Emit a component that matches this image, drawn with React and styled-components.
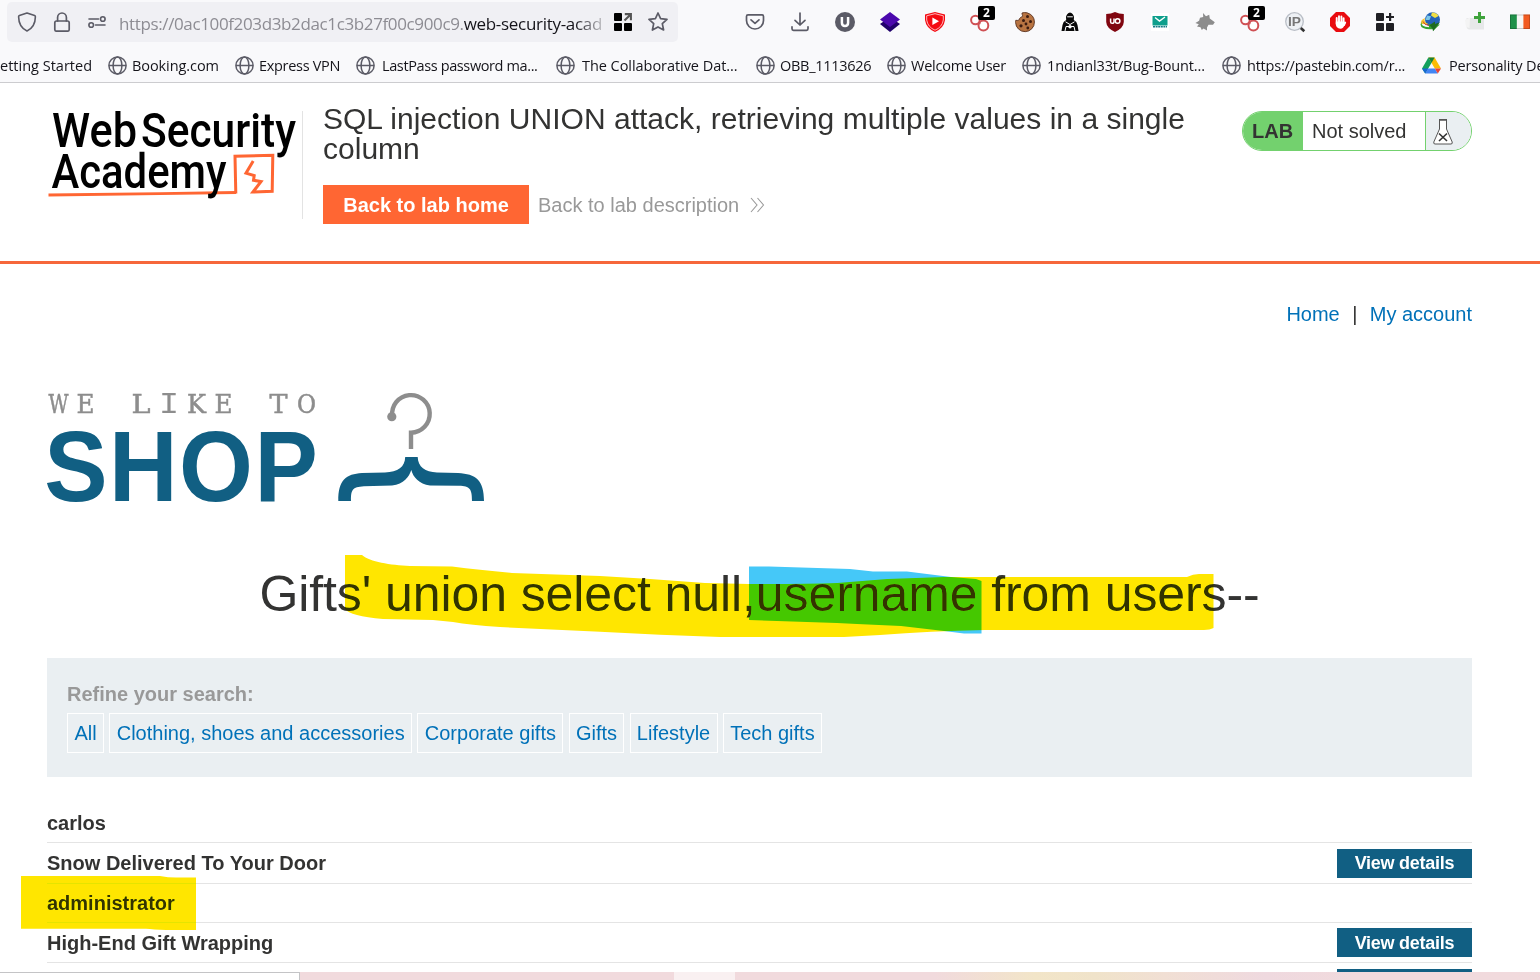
import React from "react";
import styled, { createGlobalStyle } from "styled-components";

const Global = createGlobalStyle`
  * { box-sizing: border-box; }
  body { margin: 0; background: #fff; overflow: hidden; }
`;

const Window = styled.div`
  width: 1540px;
  height: 980px;
  overflow: hidden;
  display: flex;
  flex-direction: column;
  background: #fff;
  color: #333332;
  font: 20px/24px "Liberation Sans", Arial, sans-serif;
`;

/* ---------- browser chrome ---------- */
const Chrome = styled.div`
  flex: none;
  height: 83px;
  background: #f9f9fb;
  border-bottom: 1px solid #cccccf;
  font-family: "Open Sans", "Noto Sans", sans-serif;
  color: #15141a;
`;
const Toolbar = styled.div`
  height: 44px;
  padding: 2px 0 2px 7px;
  display: flex;
`;
const UrlBar = styled.div`
  flex: none;
  width: 671px;
  height: 40px;
  border-radius: 5px;
  background: #f0f0f4;
  display: flex;
  align-items: center;
  padding-left: 10px;
`;
const UrlIcon = styled.span`
  flex: none;
  width: ${(p) => p.$w}px;
  height: 20px;
  svg { display: block; }
`;
const UrlText = styled.div`
  flex: none;
  width: 484px;
  margin-right: 10px;
  font-size: 17px;
  line-height: 24px;
  padding-top: 3px;
  white-space: nowrap;
  overflow: hidden;
  color: #8d8c93;
  mask-image: linear-gradient(to right, #000 455px, rgba(0, 0, 0, 0.2) 484px);
`;
const UrlPart = styled.span`
  letter-spacing: ${(p) => p.$ls}px;
  color: ${(p) => (p.$strong ? "#15141a" : "inherit")};
`;
const Extensions = styled.div`
  flex: none;
  margin-left: 54px;
  display: flex;
  align-items: center;
`;
const Extension = styled.div`
  flex: none;
  width: 45px;
  height: 20px;
  display: flex;
  justify-content: center;
  position: relative;
  svg { display: block; overflow: visible; }
`;
const Count = styled.span`
  position: absolute;
  left: 21px;
  top: -6px;
  width: 17px;
  height: 14px;
  border-radius: 2px;
  background: #000;
  color: #fff;
  font: bold 12px/14px "Open Sans", sans-serif;
  text-align: center;
`;
const Bookmarks = styled.div`
  height: 38px;
  display: flex;
  align-items: center;
  padding-top: 5px;
  font-size: 14.5px;
  white-space: nowrap;
`;
const Bookmark = styled.div`
  flex: none;
  width: ${(p) => p.$w}px;
  display: flex;
  align-items: center;
  svg { flex: none; display: block; margin-right: ${(p) => p.$gap || 5}px; }
`;
const BookmarkLabel = styled.span`
  letter-spacing: ${(p) => p.$ls || 0}px;
`;
const FirstBookmark = styled.div`
  flex: none;
  width: 108px;
  padding-right: 16px;
  display: flex;
  justify-content: flex-end;
  overflow: hidden;
`;

/* ---------- lab header ---------- */
const Page = styled.main`
  flex: 1;
  min-height: 0;
  overflow: hidden;
`;
const LabHeader = styled.header`
  height: 181px;
  border-bottom: 3px solid #f6673b;
  padding: 21px 68px 0 47px;
  display: flex;
  align-items: flex-start;
`;
const LogoCell = styled.div`
  flex: none;
  width: 256px;
  height: 108px;
  margin-top: 7px;
  border-right: 1px solid #e3e3e3;
  svg { display: block; }
`;
const TitleCell = styled.div`
  flex: none;
  width: 939px;
  padding: 0 50px 0 20px;
`;
const Title = styled.h2`
  margin: 0;
  font-size: 30px;
  line-height: 30px;
  font-weight: 400;
  letter-spacing: 0.015px;
`;
const Actions = styled.div`
  margin-top: 21px;
  display: flex;
  align-items: center;
`;
const HomeButton = styled.a`
  width: 206px;
  height: 39px;
  background: #ff6633;
  color: #fff;
  font-weight: 700;
  line-height: 40px;
  text-align: center;
`;
const DescriptionLink = styled.a`
  margin-left: 9px;
  display: flex;
  align-items: center;
  gap: 11px;
  color: #999;
  padding-top: 1px;
`;
const LabStatus = styled.div`
  flex: none;
  margin-top: 7px;
  width: 230px;
  height: 40px;
  border: 1px solid #73d16e;
  border-radius: 20px;
  overflow: hidden;
  display: flex;
  line-height: 38px;
`;
const LabTag = styled.span`
  width: 60px;
  padding-left: 9px;
  background: #73d16e;
  font-weight: 700;
  line-height: 39px;
`;
const LabState = styled.span`
  flex: 1;
  padding-left: 9px;
`;
const LabFlask = styled.span`
  width: 46px;
  border-left: 1px solid #73d16e;
  background: #eaeff2;
  padding: 7px 0 0 7px;
  svg { display: block; }
`;

/* ---------- shop page ---------- */
const Shop = styled.section`
  padding: 38px 68px 0 47px;
`;
const Nav = styled.nav`
  display: flex;
  justify-content: flex-end;
  height: 24px;
  gap: 12.4px;
`;
const Link = styled.a`
  color: #0071b8;
`;
const ShopLogo = styled.div`
  height: 116px;
  margin-top: 64px;
  svg { display: block; }
`;
const Heading = styled.h1`
  position: relative;
  margin: 59px 0 0;
  height: 93px;
  font-size: 50px;
  line-height: 58px;
  font-weight: 400;
  letter-spacing: -0.09px;
  text-align: center;
`;
const Marker = styled.svg`
  position: absolute;
  left: ${(p) => p.$x}px;
  top: ${(p) => p.$y}px;
  overflow: visible;
  mix-blend-mode: darken;
  pointer-events: none;
`;
const Filters = styled.div`
  height: 119px;
  background: #eaeff2;
  padding: 24px 20px 0;
`;
const FilterTitle = styled.div`
  font-weight: 700;
  color: #999;
  height: 31px;
`;
const Tags = styled.div`
  display: flex;
  gap: 5.4px;
`;
const Tag = styled.a`
  width: ${(p) => p.$w}px;
  height: 40px;
  border: 1px solid #fff;
  line-height: 38px;
  text-align: center;
  white-space: nowrap;
  color: #0071b8;
`;
const Table = styled.div`
  margin-top: 26px;
`;
const Row = styled.div`
  position: relative;
  height: ${(p) => p.$h}px;
  border-bottom: 1px solid #e4e4e4;
  display: flex;
  justify-content: space-between;
  align-items: flex-start;
  font-weight: 700;
`;
const RowName = styled.span`
  padding-top: ${(p) => p.$top}px;
`;
const Details = styled.a`
  margin-top: ${(p) => p.$top}px;
  width: 135px;
  height: 29px;
  background: #115f83;
  color: #fff;
  font-size: 18px;
  letter-spacing: -0.25px;
  line-height: ${(p) => p.$lh || 28}px;
  text-align: center;
`;

/* ---------- bottom edge ---------- */
const Edge = styled.div`
  flex: none;
  height: 8px;
  display: flex;
`;
const StatusPanel = styled.div`
  width: 300px;
  background: #fff;
  border-top: 1px solid #c4c4c6;
  border-right: 1px solid #c4c4c6;
`;
const Strip = styled.div`
  flex: ${(p) => (p.$w ? "none" : 1)};
  width: ${(p) => (p.$w ? p.$w + "px" : "auto")};
  background: ${(p) => p.$bg};
`;

/* ---------- icons ---------- */
const Globe = () => (
  <svg width="19" height="19" viewBox="0 0 19 19" fill="none" stroke="#5b5b66" strokeWidth="1.5">
    <circle cx="9.5" cy="9.5" r="8.6" />
    <ellipse cx="9.5" cy="9.5" rx="4.4" ry="8.6" />
    <path d="M1 9.5H18" />
  </svg>
);
const Drive = () => (
  <svg width="19" height="17" viewBox="0 0 19 17">
    <path d="M6.4 0.5H12.6L19 11.5H12.8Z" fill="#fbbc04" />
    <path d="M6.4 0.5L0 11.5L3.2 16.5L9.6 5.8Z" fill="#12a05c" />
    <path d="M6.4 0.5H12.6L9.6 5.8Z" fill="#188038" />
    <path d="M6.2 11.5H12.8L15.8 16.5H3.2Z" fill="#4285f4" />
    <path d="M12.8 11.5H19L15.8 16.5Z" fill="#ea4335" />
    <path d="M0 11.5H6.2L3.2 16.5Z" fill="#1967d2" />
  </svg>
);
const line = { fill: "none", stroke: "#5b5b66", strokeWidth: 1.7, strokeLinecap: "round", strokeLinejoin: "round" };
const Shield = () => (
  <svg width="20" height="20" viewBox="0 0 20 20" {...line} strokeWidth="1.6">
    <path d="M10 1 L17.6 3.6 Q18.4 3.9 18.4 4.8 C18.3 11.5 15.8 16.4 10 19 C4.2 16.4 1.7 11.5 1.6 4.8 Q1.6 3.9 2.4 3.6Z" />
  </svg>
);
const Lock = () => (
  <svg width="20" height="20" viewBox="0 0 20 20" {...line} strokeWidth="1.7">
    <rect x="2.8" y="9" width="14.4" height="10.2" rx="1.8" />
    <path d="M5.6 9V5.4a4.4 4.4 0 0 1 8.8 0V9" />
  </svg>
);
const Sliders = () => (
  <svg width="20" height="20" viewBox="0 0 20 20" {...line} strokeWidth="1.6">
    <path d="M2 7H11.5M8.5 13H18" />
    <circle cx="15.8" cy="7" r="2.3" />
    <circle cx="4.2" cy="13" r="2.3" />
  </svg>
);
const OpenGrid = () => (
  <svg width="20" height="20" viewBox="0 0 20 20">
    <rect x="1" y="1" width="8" height="8" rx="1" />
    <rect x="1" y="11" width="8" height="8" rx="1" />
    <rect x="11" y="11" width="8" height="8" rx="1" />
    <path d="M11.8 2.1H17.9V8.2M17.6 2.4L11.5 8.5" fill="none" stroke="#555" strokeWidth="2.1" />
  </svg>
);
const Star = () => (
  <svg width="20" height="20" viewBox="0 0 20 20" {...line}>
    <path d="M10 1L12.6 6.7L19 7.4L14.3 11.7L15.6 18L10 14.9L4.4 18L5.7 11.7L1 7.4L7.4 6.7Z" />
  </svg>
);
const Pocket = () => (
  <svg width="20" height="20" viewBox="0 0 20 20" {...line}>
    <path d="M3 2.9H17Q18.5 2.9 18.5 4.4V8.5A8.5 8.5 0 0 1 1.5 8.5V4.4Q1.5 2.9 3 2.9Z" />
    <path d="M6 7.8L10 11.4L14 7.8" />
  </svg>
);
const Download = () => (
  <svg width="20" height="20" viewBox="0 0 20 20" {...line}>
    <path d="M10 1V13M5 8.3L10 13L15 8.3M2 14.8V16.8Q2 18.3 3.5 18.3H16.5Q18 18.3 18 16.8V14.8" />
  </svg>
);
const UCircle = () => (
  <svg width="20" height="20" viewBox="0 0 20 20">
    <circle cx="10" cy="10" r="10" fill="#5b5b66" />
    <path d="M6.9 5V10.8Q6.9 14 10 14Q13.1 14 13.1 10.8V5" fill="none" stroke="#fff" strokeWidth="2.5" />
  </svg>
);
const Layers = () => (
  <svg width="20" height="20" viewBox="0 0 20 20">
    <path d="M0 12L10 5L20 12L10 20Z" fill="#20006b" />
    <path d="M0 7.5L10 0L20 7.5L10 15Z" fill="#4b08ad" />
  </svg>
);
const RedPlay = () => (
  <svg width="20" height="20" viewBox="0 0 20 20">
    <path d="M10 0L20 2.5V8Q19 16 10 20Q1 16 0 8V2.5Z" fill="#f40b12" />
    <path d="M10 1.7L18.3 3.8V8Q17.3 15 10 18.2Q2.7 15 1.7 8V3.8Z" fill="none" stroke="#fff" strokeWidth=".7" />
    <path d="M7.4 5.5V13L14 9.2Z" fill="#fff" />
  </svg>
);
const Rings = () => (
  <svg width="20" height="20" viewBox="0 0 20 20" fill="#fff" stroke="#cf5054" strokeWidth="2">
    <circle cx="5.4" cy="8" r="4.3" />
    <circle cx="13.4" cy="13.5" r="4.9" />
    <path d="M8.5 10.5L10.5 11.5" />
  </svg>
);
const Cookie = () => (
  <svg width="20" height="20" viewBox="0 0 20 20">
    <path d="M7 1Q9.5 .2 12 .8Q19.3 3 19.4 10A9.4 9.4 0 0 1 .6 10.5Q.4 9.5 .8 8.3Q3 9 4.5 7.5Q4.5 6 5.5 5.5Q8 5 7.6 3.2Q7 2.5 7 1Z" fill="#b87442" stroke="#59301c" strokeWidth=".9" />
    <g fill="#3b1b10">
      <circle cx="12.5" cy="4.5" r="1.5" /><circle cx="8.5" cy="8.5" r="1.5" /><circle cx="15.5" cy="9.5" r="1.5" />
      <circle cx="11" cy="12" r="1.4" /><circle cx="6" cy="13.8" r="1.6" /><circle cx="12.8" cy="16" r="1.4" />
    </g>
  </svg>
);
const Hooded = () => (
  <svg width="20" height="20" viewBox="0 0 20 20">
    <circle cx="10" cy="10" r="10" fill="#fff" />
    <path d="M6 5Q6.8 1 10 .4Q13.2 1 14 5L13.8 8Q17 9.5 17.5 13L18.5 19H1.5L2.5 13Q3 9.5 6.2 8Z" fill="#0a0a0a" />
    <path d="M7.2 4.8H12.8M5.5 9.8L10 12.5L14.5 9.8M6 14.5H14M6 14.5L5 19M14 14.5L15 19" stroke="#fff" strokeWidth="1" fill="none" />
    <circle cx="10" cy="14.8" r="1.7" fill="#fff" />
  </svg>
);
const UShield = () => (
  <svg width="20" height="20" viewBox="0 0 20 20">
    <path d="M10 0Q14 2 18.8 2V10Q18.5 16 10 20Q1.5 16 1.2 10V2Q6 2 10 0Z" fill="#800610" />
    <path d="M5.6 6.5V9.7Q5.6 11.3 7.1 11.3Q9 11.3 9 9.7V6.5" fill="none" stroke="#fff" strokeWidth="1.5" />
    <circle cx="12.6" cy="9" r="2.3" fill="none" stroke="#fff" strokeWidth="1.5" />
  </svg>
);
const Mail = () => (
  <svg width="20" height="20" viewBox="0 0 20 20">
    <rect x="1" y="1" width="18" height="18" fill="#fff" />
    <rect x="2.5" y="4" width="15" height="9.5" fill="#0e9f8c" />
    <path d="M5 5.5L9.5 9L15 5" fill="none" stroke="#fff" strokeWidth="1.4" />
    <path d="M3 14.8H17" stroke="#167c87" strokeWidth="1.4" strokeDasharray="2 .6" />
  </svg>
);
const Wolf = () => (
  <svg width="20" height="20" viewBox="0 0 20 20">
    <path d="M8 1L11 4.2L14.2 2.8L14.8 6.5L19.8 10.2L18 12.7L13.5 12.8L12 15.5V18.5L8.5 16.4L6.8 18L5.5 15.2L2 14.6L3.8 12.3L.4 11L4.1 8.8L5 5.8L8.2 5Z" fill="#8c8c8c" />
  </svg>
);
const IpLens = () => (
  <svg width="20" height="20" viewBox="0 0 20 20">
    <circle cx="9.5" cy="9.5" r="8.8" fill="#eef1f5" stroke="#b9bec6" strokeWidth="1.3" />
    <path d="M15.8 16L19.3 19.3" stroke="#333" strokeWidth="2.6" />
    <text x="3" y="14" textLength="13" lengthAdjust="spacingAndGlyphs" fill="#777" fontFamily="Liberation Sans, sans-serif" fontWeight="700" fontSize="12.5">IP</text>
  </svg>
);
const StopHand = () => (
  <svg width="20" height="20" viewBox="0 0 20 20">
    <path d="M6 0H14L20 6V14L14 20H6L0 14V6Z" fill="#e90b0f" />
    <g stroke="#fff" strokeWidth="1.9" strokeLinecap="round">
      <path d="M6.7 6V12M9 4.3V11M11.4 4.5V11M13.6 6.2V12" />
      <path d="M14 13L15.2 10.5" />
    </g>
    <path d="M5.8 9.5H14.5V13Q13.5 16.7 10.3 16.7Q6 16.3 5.8 12Z" fill="#fff" />
  </svg>
);
const GridPlus = () => (
  <svg width="20" height="20" viewBox="0 0 20 20" fill="#202024">
    <rect x="1" y="1" width="8" height="8" rx="1" />
    <rect x="1" y="11" width="8" height="8" rx="1" />
    <rect x="11" y="11" width="8" height="8" rx="1" />
    <path d="M14 1H16.2V3.9H19V6.1H16.2V9H14V6.1H11V3.9H14Z" />
  </svg>
);
const GlobeArrow = () => (
  <svg width="20" height="20" viewBox="0 0 20 20">
    <circle cx="12.5" cy="7.8" r="7.5" fill="#2463b8" />
    <path d="M12 .6Q17 1 18.5 4L15 6L11 3.5Z" fill="#f2df44" />
    <path d="M7 3.5L11 4.2L9.5 8L5.5 8Z" fill="#7cc7e8" />
    <path d="M1 12Q0 8 5 6Q3.2 10 8.5 12Z" fill="#f3c330" />
    <path d="M1.5 10Q.5 15 9 15.2V12L19.8 12.5L13 19V17.2Q1 18 .5 12.5Z" fill="#34a130" />
    <path d="M9.5 13.2L15 9.5V12L19.7 10.2L13 19.3L12.6 16.8Z" fill="#1d6b20" />
    <path d="M3 9.5Q4 13 9 13.4" stroke="#d44526" strokeWidth="1" fill="none" />
  </svg>
);
const PagePlus = () => (
  <svg width="20" height="20" viewBox="0 0 20 20">
    <path d="M1.5 6H19V17.5H4Q1.5 17 1.5 14Z" fill="#e7e8e9" />
    <path d="M0 8L5 5.5L4.5 16L1 15Z" fill="#f4f4f4" />
    <path d="M13 0H16V4H20V7H16V11H13V7H9V4H13Z" fill="#3fa33c" />
  </svg>
);
const Flag = () => (
  <svg width="20" height="20" viewBox="0 0 20 20">
    <rect x="0" y="2.5" width="20" height="14.5" fill="#f6f6f4" />
    <rect x="0" y="2.5" width="6.8" height="14.5" fill="#1f9149" />
    <rect x="13.4" y="2.5" width="6.6" height="14.5" fill="#f25b21" />
    <rect x=".5" y="3" width="19" height="13.5" fill="none" stroke="#00000030" />
  </svg>
);
const Chevrons = () => (
  <svg width="15" height="16" viewBox="0 0 15 16" fill="none" stroke="#999" strokeWidth="1.1">
    <path d="M1 1L7 8L1 15M7.5 1L13.5 8L7.5 15" />
  </svg>
);
const Flask = () => (
  <svg width="20" height="26" viewBox="0 0 20 26">
    <path d="M6.5 1V10L.8 23Q.3 25 2 25H18Q19.7 25 19.2 23L13.5 10V1Z" fill="#fff" stroke="#555" strokeWidth="1" />
    <path d="M6 .8H14" stroke="#555" strokeWidth="1.6" />
    <path d="M6 14.5L14 22M14 14.5L6 22" stroke="#333" strokeWidth="1.6" />
  </svg>
);

const AcademyLogo = () => (
  <svg width="255" height="108" viewBox="47 111 255 108" fontFamily="Roboto, sans-serif" fontWeight="500" fontSize="47.5">
    <path d="M48.5 195Q110 194.2 160 193.6T236 192.5" fill="none" stroke="#ff6633" strokeWidth="2.8" />
    <path d="M235.8 193.5L235 156.3L272.8 155.3L272.2 191.3L253 192L261 181.5L253.5 180.3L254.2 175.5L246 173.2L253.2 161" fill="none" stroke="#ff6633" strokeWidth="3" />
    <g fill="#000">
      <text x="52" y="146.7" textLength="85" lengthAdjust="spacingAndGlyphs">Web</text>
      <text x="141" y="146.7" textLength="155" lengthAdjust="spacingAndGlyphs">Security</text>
      <text x="51.5" y="187.5" textLength="175" lengthAdjust="spacingAndGlyphs">Academy</text>
    </g>
  </svg>
);
const mono = { fontFamily: "Liberation Mono, monospace", fontSize: 29, strokeWidth: 0 };
const caps = [["W", 48.5, 20], ["E", 76.5, 18], ["L", 131.5, 19], ["I", 159, 20, mono], ["K", 187, 19], ["E", 214.5, 18], ["T", 269.5, 18], ["O", 297, 19]];
const ShopArt = () => (
  <svg width="440" height="116" viewBox="47 390 440 116">
    <g fill="#8d8d8d" stroke="#8d8d8d" strokeWidth="0.5" fontFamily="DejaVu Serif, serif" fontSize="25.5">
      {caps.map(([c, x, w, extra], i) => (
        <text key={i} x={x} y="413" textLength={w} lengthAdjust="spacingAndGlyphs" {...extra}>{c}</text>
      ))}
    </g>
    <text transform="translate(44.3 501) scale(.95 1)" letterSpacing="1.5" fill="#115f83" fontFamily="Liberation Sans, sans-serif" fontWeight="700" fontSize="100">SHOP</text>
    <path d="M392.3 416.5A18.8 18.8 0 1 1 411 432.7V449" fill="none" stroke="#8d8d8d" strokeWidth="4.4" />
    <circle cx="391.8" cy="416.7" r="4.6" fill="#8d8d8d" />
    <path d="M338.3 501C338 480 346 474 362 473L385 472.5C398 472 405 467 405.2 457H417.7C418 467 425 472 437 472.5L458 473C476 474 484 480 484 501H472C472 489 470 486 459 485.8L430 485.5C419 484 413 477 411.3 470C409 477 404 484 392 485.5L364 486.3C352 487 351 490 351 501Z" fill="#115f83" />
  </svg>
);

const extensions = [Pocket, Download, UCircle, Layers, RedPlay, Rings, Cookie, Hooded, UShield, Mail, Wolf, Rings, IpLens, StopHand, GridPlus, GlobeArrow, PagePlus, Flag];
const bookmarks = [
  ["Booking.com", 127, -0.08], ["Express VPN", 121, -0.3], ["LastPass password ma...", 200, -0.38, 7], ["The Collaborative Dat...", 200, -0.05, 7],
  ["OBB_1113626", 131, -0.28], ["Welcome User", 135, -0.23], ["1ndianl33t/Bug-Bount...", 200, -0.12, 6], ["https://pastebin.com/r...", 200, -0.22, 6],
];
const tags = [["All", 37], ["Clothing, shoes and accessories", 302.6], ["Corporate gifts", 146], ["Gifts", 55.4], ["Lifestyle", 88], ["Tech gifts", 99]];

export default function App() {
  return (
    <Window>
      <Global />
      <Chrome>
        <Toolbar>
          <UrlBar>
            <UrlIcon $w={35}><Shield /></UrlIcon>
            <UrlIcon $w={35}><Lock /></UrlIcon>
            <UrlIcon $w={32}><Sliders /></UrlIcon>
            <UrlText>
              <UrlPart $ls={-0.37}>https://0ac100f203d3b2dac1c3b27f00c900c9.</UrlPart>
              <UrlPart $ls={-0.3} $strong>web-security-acad</UrlPart>
            </UrlText>
            <UrlIcon $w={35}><OpenGrid /></UrlIcon>
            <UrlIcon $w={20}><Star /></UrlIcon>
          </UrlBar>
          <Extensions>
            {extensions.map((Icon, i) => (
              <Extension key={i}>
                <Icon />
                {Icon === Rings && <Count>2</Count>}
              </Extension>
            ))}
          </Extensions>
        </Toolbar>
        <Bookmarks>
          <FirstBookmark><BookmarkLabel>Getting Started</BookmarkLabel></FirstBookmark>
          {bookmarks.map(([t, w, ls, gap]) => (
            <Bookmark key={t} $w={w} $gap={gap}><Globe /><BookmarkLabel $ls={ls}>{t}</BookmarkLabel></Bookmark>
          ))}
          <Bookmark $w={118} $gap={8}><Drive /><BookmarkLabel $ls={-0.15}>Personality De</BookmarkLabel></Bookmark>
        </Bookmarks>
      </Chrome>

      <Page>
        <LabHeader>
          <LogoCell><AcademyLogo /></LogoCell>
          <TitleCell>
            <Title>SQL injection UNION attack, retrieving multiple values in a single column</Title>
            <Actions>
              <HomeButton>Back to lab home</HomeButton>
              <DescriptionLink>Back to lab description <Chevrons /></DescriptionLink>
            </Actions>
          </TitleCell>
          <LabStatus>
            <LabTag>LAB</LabTag>
            <LabState>Not solved</LabState>
            <LabFlask><Flask /></LabFlask>
          </LabStatus>
        </LabHeader>

        <Shop>
          <Nav><Link>Home</Link><span>|</span><Link>My account</Link></Nav>
          <ShopLogo><ShopArt /></ShopLogo>
          <Heading>
            Gifts' union select null,username from users--
            <Marker $x={298} $y={-10} width="869" height="83" viewBox="345 555 869 83">
              <path d="M345 555H362C370 562 390 565 410 566L452 566.5Q480 570 512 573L600 576L650 579L705 583L749 584Q805 584 837 583L887 579L944 577H1187Q1193 574 1199 574H1213.5V628Q1210 630 1204 630H985Q930 631 880 635L844 637H720L660 634.7L600 631.7L500 627Q470 625 453 622L433 620L383 619Q350 616 345 609Z" fill="#ffe600" />
            </Marker>
            <Marker $x={702} $y={1} width="233" height="68" viewBox="749 566 233 68">
              <path d="M749 566.5H769L850 569L873 571.5H907L951 577L976 579L981.5 581V633.5H964L944 631L901 626L857 624L837 623L749 620Z" fill="#45c8f8" />
            </Marker>
          </Heading>
          <Filters>
            <FilterTitle>Refine your search:</FilterTitle>
            <Tags>{tags.map(([t, w]) => <Tag key={t} $w={w}>{t}</Tag>)}</Tags>
          </Filters>
          <Table>
            <Row $h={40}><RowName $top={8}>carlos</RowName></Row>
            <Row $h={41}><RowName $top={8}>Snow Delivered To Your Door</RowName><Details $top={6}>View details</Details></Row>
            <Row $h={39}>
              <RowName $top={7}>administrator</RowName>
              <Marker $x={-26} $y={-8} width="175" height="54" viewBox="0 0 175 54">
                <path d="M0 0H139Q147 1.5 155 1.5H175V54H145Q132 53.5 125 52.8H0Z" fill="#ffe600" />
              </Marker>
            </Row>
            <Row $h={40}><RowName $top={8}>High-End Gift Wrapping</RowName><Details $top={5} $lh={30}>View details</Details></Row>
            <Row $h={40}><RowName /><Details $top={6}>View details</Details></Row>
          </Table>
        </Shop>
      </Page>

      <Edge>
        <StatusPanel />
        <Strip $w={374} $bg="#f1dadd" />
        <Strip $w={61} $bg="#f9f0f1" />
        <Strip $bg="linear-gradient(to right, #f1dadd 0, #f1dadd 200px, #f2e5c8 300px, #f0e3ca 360px, #f1dfd4 430px, #efd9df 530px, #f1dadd 620px)" />
      </Edge>
    </Window>
  );
}
